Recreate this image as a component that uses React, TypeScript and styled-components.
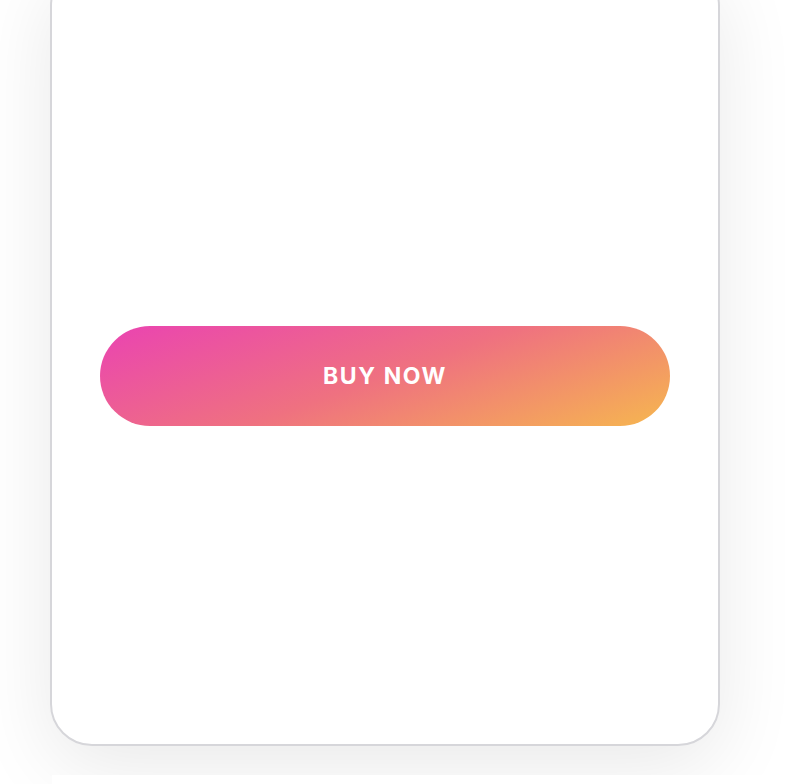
import React from "react";
import styled, { createGlobalStyle } from "styled-components";

const Global = createGlobalStyle`
  html, body {
    margin: 0;
    padding: 0;
    background: #ffffff;
    overflow: hidden;
  }
  body {
    font-family: "Inter", "Liberation Sans", sans-serif;
  }
`;

const App = () => {
  return (
    <Page>
      <Global />
      <Card>
        <BuyButton type="button">BUY NOW</BuyButton>
      </Card>
      <NextBlock />
    </Page>
  );
};

export default App;

const Page = styled.div`
  width: 806px;
  height: 784px;
  overflow: hidden;
  display: flex;
  flex-direction: column;
  align-items: flex-start;
  padding-left: 50px;
  box-sizing: border-box;
`;

const Card = styled.div`
  margin-top: -36px;
  width: 670px;
  height: 782px;
  box-sizing: border-box;
  flex-shrink: 0;
  background: #ffffff;
  border: 2px solid #d6d6da;
  border-radius: 42px;
  box-shadow: 0 20px 80px rgba(0, 0, 0, 0.09);
  display: flex;
  flex-direction: column;
  justify-content: flex-start;
  padding: 360px 48px 0;
`;

const BuyButton = styled.button`
  width: 570px;
  height: 100px;
  border: 0;
  outline: none;
  border-radius: 50px;
  background: linear-gradient(160deg, #ea43b2 0%, #ef7180 50%, #f6b74f 100%);
  color: #ffffff;
  font-family: "Inter", "Liberation Sans", sans-serif;
  font-weight: 700;
  font-size: 23px;
  letter-spacing: 1.6px;
  cursor: pointer;
`;

const NextBlock = styled.div`
  margin-top: 29px;
  margin-left: 2px;
  width: 751px;
  height: 40px;
  flex-shrink: 0;
  background: #ffffff;
`;
